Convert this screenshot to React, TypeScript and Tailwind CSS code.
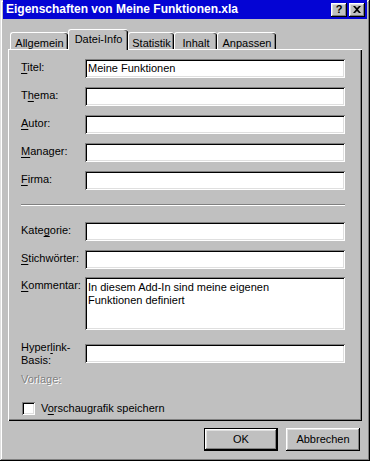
/** Win98-Dialog: Eigenschaften von Meine Funktionen.xla (Register Datei-Info). */

const raised =
  "shadow-[inset_-1px_-1px_0_#000,inset_1px_1px_0_#fff,inset_-2px_-2px_0_#808080,inset_2px_2px_0_#dfdfdf]";
const sunken =
  "shadow-[inset_1px_1px_0_#808080,inset_-1px_-1px_0_#fff,inset_2px_2px_0_#000,inset_-2px_-2px_0_#dfdfdf]";

export default function App() {
  return (
    <div
      className={`flex h-[461px] w-[370px] flex-col bg-[#c0c0c0] font-['Liberation_Sans',Arial,sans-serif] text-[11px] leading-[13px] text-black shadow-[inset_-1px_-1px_0_#000,inset_1px_1px_0_#dfdfdf,inset_-2px_-2px_0_#808080,inset_2px_2px_0_#fff]`}
    >
      {/* Titelleiste */}
      <div className="mx-[3px] flex h-[19px] items-center bg-[#0404d4] pl-[3px] pr-[2px]">
        <span className="flex-1 text-[12px] font-bold text-white">Eigenschaften von Meine Funktionen.xla</span>
        <CaptionButton>
          <span className="text-[11px] font-bold leading-none">?</span>
        </CaptionButton>
        <div className="w-[2px]" />
        <CaptionButton>
          <svg width="8" height="7" viewBox="0 0 8 7">
            <path d="M0 0h2l2 2 2-2h2L5 3.5 8 7H6L4 5 2 7H0l3-3.5z" fill="#000" />
          </svg>
        </CaptionButton>
      </div>

      {/* Register */}
      <div className="ml-[10px] mt-[10px] flex h-[20px] items-end">
        <Tab w="w-[58px]">Allgemein</Tab>
        <Tab w="w-[60px]" active>
          Datei-Info
        </Tab>
        <Tab w="w-[46px]">Statistik</Tab>
        <Tab w="w-[43px]">Inhalt</Tab>
        <Tab w="w-[59px]">Anpassen</Tab>
      </div>

      <div className="mx-[8px] flex h-[372px] flex-col border-l border-t border-white pl-[12px] pt-[9px] shadow-[inset_-1px_-1px_0_#000,inset_-2px_-2px_0_#808080]">
        <div className="flex flex-col gap-[9px]">
          <Row label={<Acc pre="" k="T" post="itel:" />} value="Meine Funktionen" />
          <Row label={<Acc pre="T" k="h" post="ema:" />} />
          <Row label={<Acc pre="" k="A" post="utor:" />} />
          <Row label={<Acc pre="" k="M" post="anager:" />} />
          <Row label={<Acc pre="" k="F" post="irma:" />} />
        </div>

        <div className="mr-[17px] mt-[14px] h-[2px] border-b border-t border-b-white border-t-[#808080]" />

        <div className="mt-[16px] flex flex-col gap-[9px]">
          <Row label={<Acc pre="Kate" k="g" post="orie:" />} />
          <Row label={<Acc pre="" k="S" post="tichwörter:" />} />
        </div>
        <div className="mt-[8px] flex">
          <div className="w-[64px] pt-[2px]">
            <Acc pre="" k="K" post="ommentar:" />
          </div>
          <div className={`h-[53px] w-[260px] bg-white px-[3px] pt-[4px] ${sunken}`}>
            <div>In diesem Add-In sind meine eigenen</div>
            <div>Funktionen definiert</div>
          </div>
        </div>

        <div className="mt-[11px] flex">
          <div className="w-[64px]">
            <div>
              Hyper<span className="underline underline-offset-2">l</span>ink-
            </div>
            <div>Basis:</div>
          </div>
          <div className={`mt-[3px] h-[19px] w-[260px] bg-white ${sunken}`} />
        </div>

        <div className="mt-[6px] text-[#808080] [text-shadow:1px_1px_0_#fff]">Vorlage:</div>

        <div className="ml-[1px] mt-[16px] flex items-center gap-[6px]">
          <div className={`h-[13px] w-[13px] bg-white ${sunken}`} />
          <span>
            V<span className="underline underline-offset-2">o</span>rschaugrafik speichern
          </span>
        </div>
      </div>

      {/* Schaltflächen */}
      <div className="mt-[7px] flex justify-end gap-[8px] pr-[10px]">
        <button className="h-[23px] w-[74px] border border-black">
          <div className={`flex h-full w-full items-center justify-center ${raised}`}>OK</div>
        </button>
        <button className={`flex h-[23px] w-[74px] items-center justify-center ${raised}`}>Abbrechen</button>
      </div>
    </div>
  );
}

function CaptionButton({ children }: { children: React.ReactNode }) {
  return (
    <div className={`flex h-[14px] w-[16px] items-center justify-center bg-[#c0c0c0] ${raised}`}>{children}</div>
  );
}

function Tab({ children, w, active }: { children: React.ReactNode; w: string; active?: boolean }) {
  return (
    <div
      className={`relative flex ${w} justify-center rounded-t-[3px] border-l border-t border-white bg-[#c0c0c0] shadow-[inset_-1px_0_0_#000,inset_-2px_0_0_#808080] ${
        active ? "z-10 -mb-[1px] h-[21px] pt-[3px]" : "h-[17px] pt-[4px]"
      }`}
    >
      {children}
    </div>
  );
}

function Acc({ pre, k, post }: { pre: string; k: string; post: string }) {
  return (
    <span>
      {pre}
      <span className="underline underline-offset-2">{k}</span>
      {post}
    </span>
  );
}

function Row({ label, value }: { label: React.ReactNode; value?: string }) {
  return (
    <div className="flex h-[19px]">
      <div className="w-[64px] pt-[2px]">{label}</div>
      <div className={`flex h-[19px] w-[260px] items-center bg-white px-[3px] ${sunken}`}>{value}</div>
    </div>
  );
}
